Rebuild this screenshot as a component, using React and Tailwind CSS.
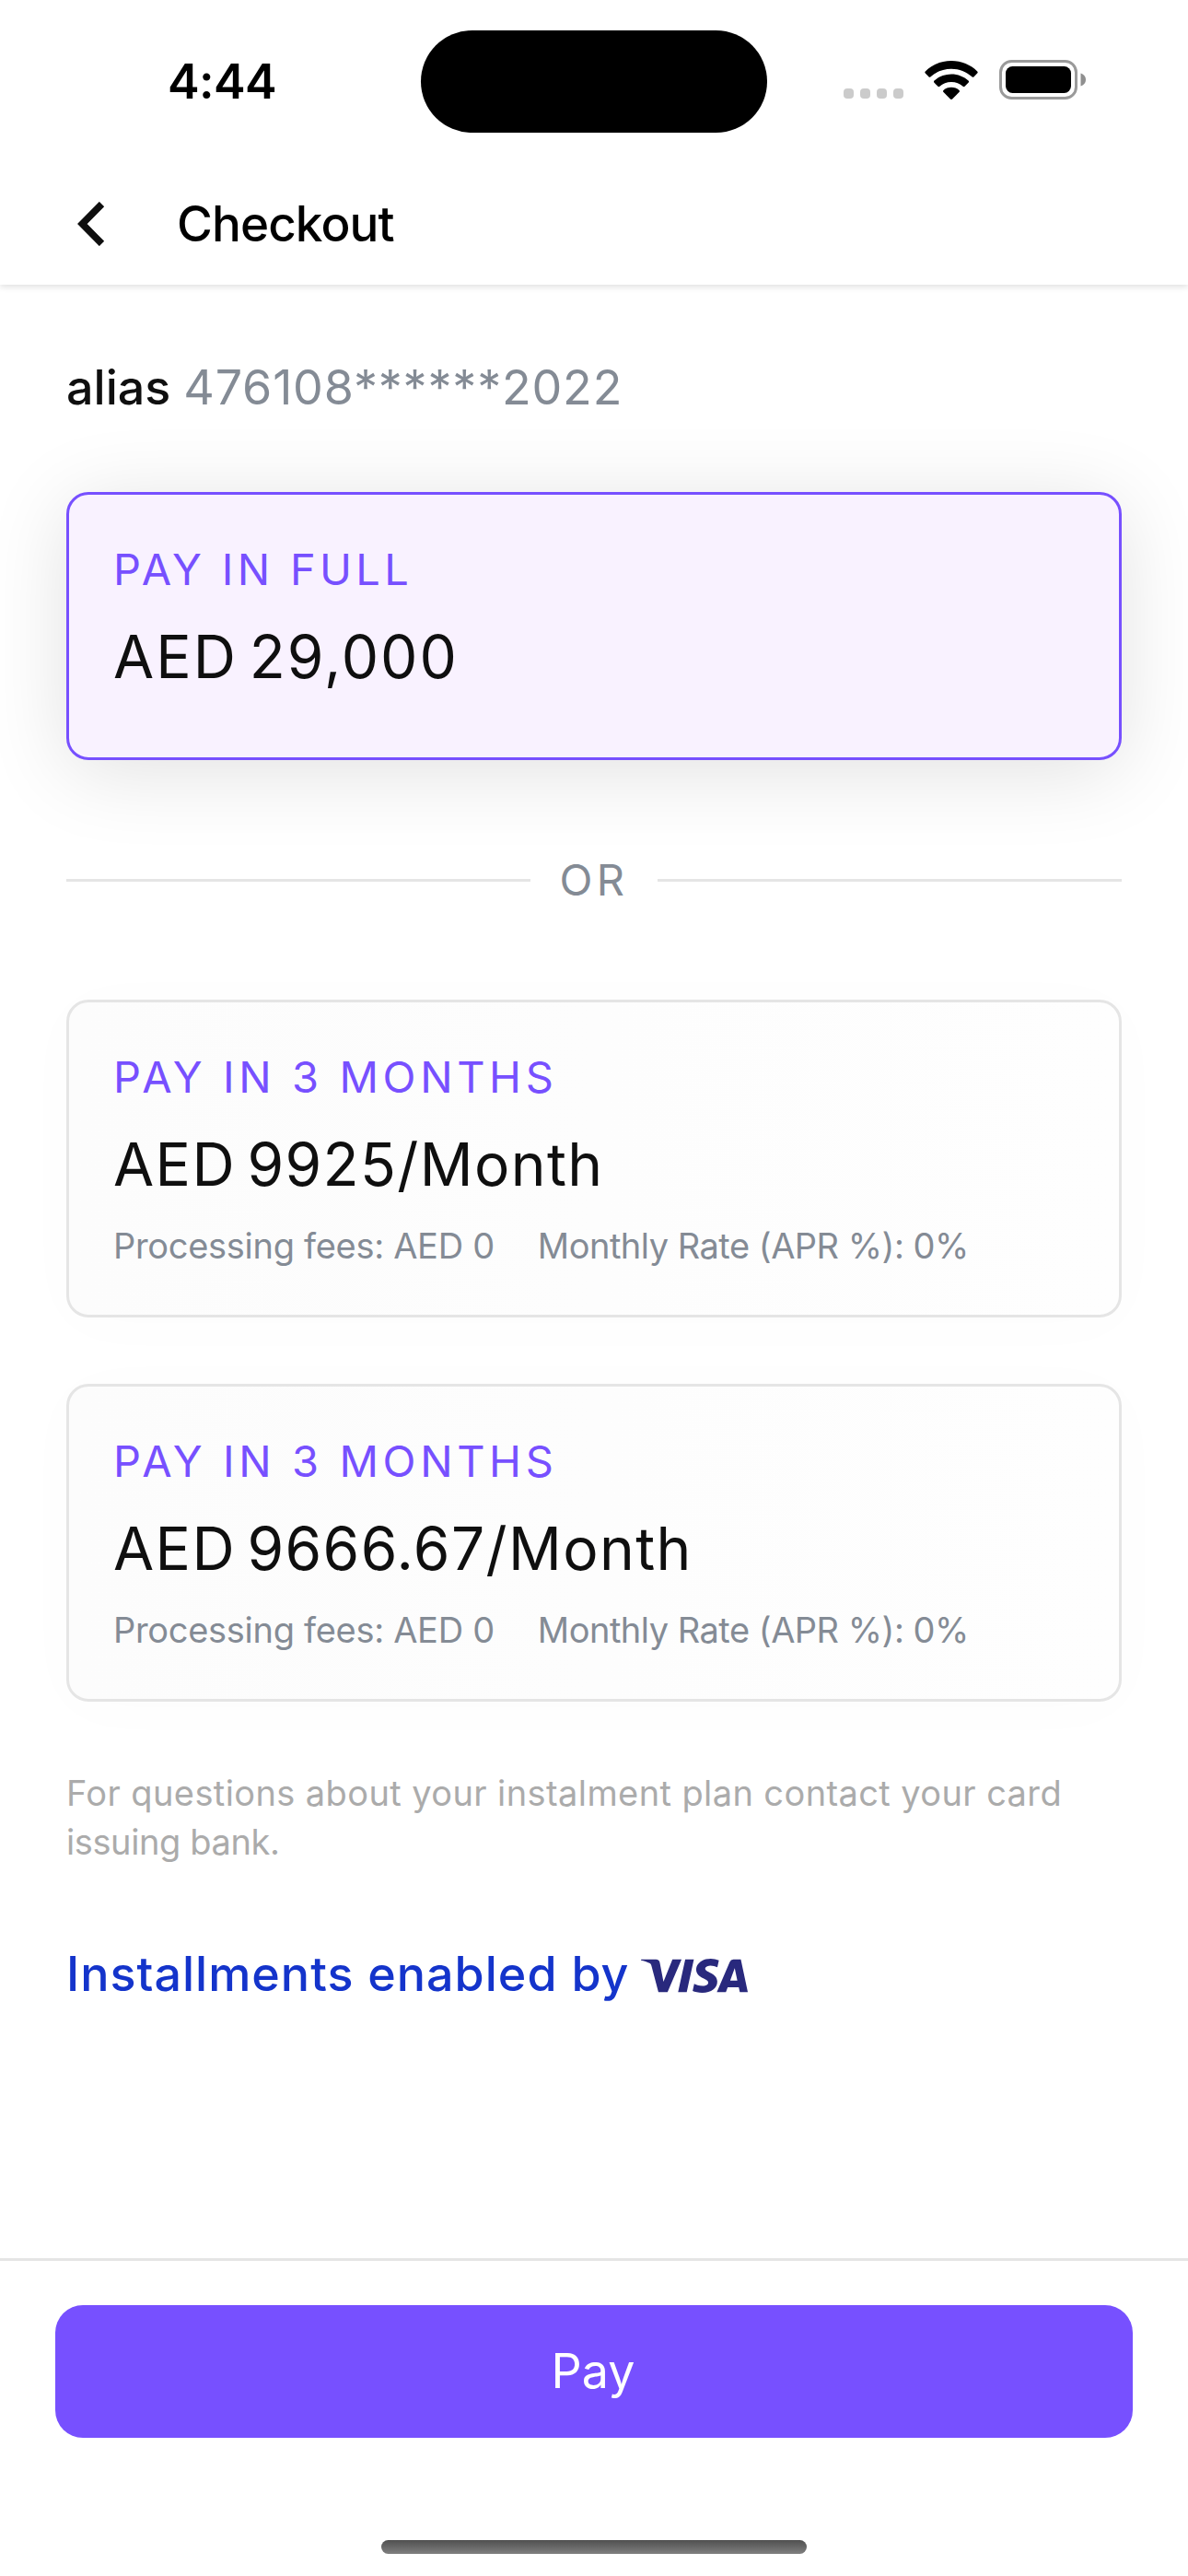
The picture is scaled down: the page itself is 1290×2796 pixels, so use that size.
import React from "react";
import { SiVisa } from "react-icons/si";

function WifiIcon() {
  return (
    <svg className="h-[42px] w-[58px]" viewBox="0 0 58 42" fill="black">
      <path d="M29 0C40 0 50 4.300 57.200 11.400Q58.200 12.500 57.200 13.600L53.600 17.300Q52.500 18.300 51.400 17.300C45.400 11.800 37.500 8.700 29 8.700S12.600 11.800 6.600 17.300Q5.500 18.300 4.400 17.300L.8 13.600Q-.2 12.500.8 11.400C8 4.300 18 0 29 0Z" />
      <path d="M29 14.600C36.200 14.600 42.700 17.300 47.500 21.600Q48.600 22.700 47.500 23.800L43.800 27.600Q42.700 28.600 41.600 27.700C38.300 24.800 33.900 23 29 23S19.700 24.800 16.400 27.700Q15.300 28.600 14.200 27.600L10.500 23.800Q9.400 22.700 10.500 21.600C15.300 17.300 21.800 14.600 29 14.600Z" />
      <path d="M29 28.800C32.300 28.800 35.300 30 37.500 31.900Q38.500 33 37.500 34.100L30.100 41.500Q29 42.400 27.900 41.500L20.500 34.100Q19.500 33 20.500 31.900C22.700 30 25.700 28.800 29 28.800Z" />
    </svg>
  );
}

function BatteryIcon() {
  return (
    <svg className="h-[43px] w-[95px]" viewBox="0 0 95 43">
      <rect x="1.500" y="1.500" width="82" height="40" rx="12" fill="none" stroke="#9a9a9a" strokeWidth="3" />
      <rect x="7" y="7" width="71" height="29" rx="7.500" fill="black" />
      <path d="M88.500 14.500C91.500 15.500 94 18 94 21.500S91.500 27.500 88.500 28.500Z" fill="#8f8f8f" />
    </svg>
  );
}

function StatusBar() {
  return (
    <div className="grid h-[177px] grid-cols-[457px_376px_1fr] items-center">
      <div className="pl-[182px] text-[52px] leading-[60px] font-semibold tracking-[-0.6px] text-black">4:44</div>
      <div className="h-[111px] rounded-full bg-black" />
      <div className="flex items-center pl-[83px]">
        <div className="mt-[26px] flex gap-[7px]">
          <span className="h-[11px] w-[11px] rounded-[4px] bg-[#cbcbcb]" />
          <span className="h-[11px] w-[11px] rounded-[4px] bg-[#cbcbcb]" />
          <span className="h-[11px] w-[11px] rounded-[4px] bg-[#cbcbcb]" />
          <span className="h-[11px] w-[11px] rounded-[4px] bg-[#cbcbcb]" />
        </div>
        <div className="-mt-[4px] ml-[23px]">
          <WifiIcon />
        </div>
        <div className="-mt-[4px] ml-[23px]">
          <BatteryIcon />
        </div>
      </div>
    </div>
  );
}

function Header() {
  return (
    <header className="bg-white shadow-[0_3px_6px_rgba(0,0,0,0.11)]">
      <StatusBar />
      <div className="flex h-[132px] items-center pl-[84px]">
        <svg className="h-[48px] w-[30px]" viewBox="0 0 30 48" fill="none" stroke="#0f0f0f" strokeWidth="7.500">
          <path d="M26.500 2.500L5.300 24L26.500 45.500" />
        </svg>
        <h1 className="ml-[78px] text-[53px] leading-[60px] font-medium tracking-[-0.9px] text-black">Checkout</h1>
      </div>
    </header>
  );
}

function PlanCard({ months, amount }) {
  return (
    <section className="h-[345px] rounded-[24px] border-[3px] border-[#e5e5e5] bg-linear-to-r from-[#fcfcfc] to-[#fefefe] px-12 pt-[51px] shadow-[0_6px_72px_rgba(0,0,0,0.015)]">
      <div className="text-[47px] leading-[60px] tracking-[4.6px] text-[#7750ff]">PAY IN {months} MONTHS</div>
      <div className="mt-[25px] text-[64px] leading-[80px] tracking-[1.4px] [word-spacing:-7px]">{amount}</div>
      <div className="mt-[23px] flex gap-[47px] text-[38px] leading-[50px] text-[#848b95]">
        <span className="tracking-[-0.3px]">Processing fees: AED 0</span>
        <span className="tracking-[-0.5px]">Monthly Rate (APR %): 0%</span>
      </div>
    </section>
  );
}

export default function App() {
  return (
    <div className="flex h-[2796px] w-[1290px] flex-col bg-white font-[Inter,sans-serif] text-[#0f0f0f]">
      <Header />
      <main className="flex-1 px-[72px] pt-[82px]">
        <div className="flex text-[52px] leading-[60px]">
          <span className="font-medium">alias</span>
          <span className="ml-[14px] tracking-[0.8px] text-[#848b95]">476108******2022</span>
        </div>
        <section className="mt-[83px] h-[291px] rounded-[24px] border-[3px] border-[#7750ff] bg-[#f9f2ff] px-12 pt-[51px] shadow-[0_12px_90px_rgba(0,0,0,0.12)]">
          <div className="text-[47px] leading-[60px] tracking-[4.3px] text-[#7750ff]">PAY IN FULL</div>
          <div className="mt-[25px] text-[64px] leading-[80px] tracking-[2px] [word-spacing:-7px]">AED 29,000</div>
        </section>
        <div className="mt-[100px] flex h-[60px] items-center text-[47px] leading-[60px] text-[#848b95]">
          <div className="h-[3px] flex-1 bg-[#e5e5e5]" />
          <span className="w-[138px] text-center tracking-[4.4px]">OR</span>
          <div className="h-[3px] flex-1 bg-[#e5e5e5]" />
        </div>
        <div className="mt-[100px] flex flex-col gap-[72px]">
          <PlanCard months={3} amount="AED 9925/Month" />
          <PlanCard months={3} amount="AED 9666.67/Month" />
        </div>
        <p className="mt-[73px] text-[38px] leading-[53px] tracking-[0.4px] text-[#ababab]">
          For questions about your instalment plan contact your card
          <br />
          <span className="tracking-[-0.4px]">issuing bank.</span>
        </p>
        <div className="mt-[87px] flex items-center text-[52px] leading-[60px] font-medium tracking-[1px] text-[#1434cb]">
          Installments enabled by
          <SiVisa className="mt-[3px] ml-[13px] h-[37px] w-[116px] text-[#29297d]" viewBox="0 8.1 24 7.800" preserveAspectRatio="none" />
        </div>
      </main>
      <footer className="flex h-[345px] flex-col items-center border-t-[3px] border-[#e5e5e5] bg-white pt-[48px]">
        <button className="h-[144px] w-[1170px] rounded-[30px] bg-[#7750ff] pr-[2px] text-[52px] leading-[60px] text-white">Pay</button>
        <div className="mt-[111px] h-[15px] w-[462px] rounded-full bg-linear-to-b from-[#505050] to-[#808080]" />
      </footer>
    </div>
  );
}
